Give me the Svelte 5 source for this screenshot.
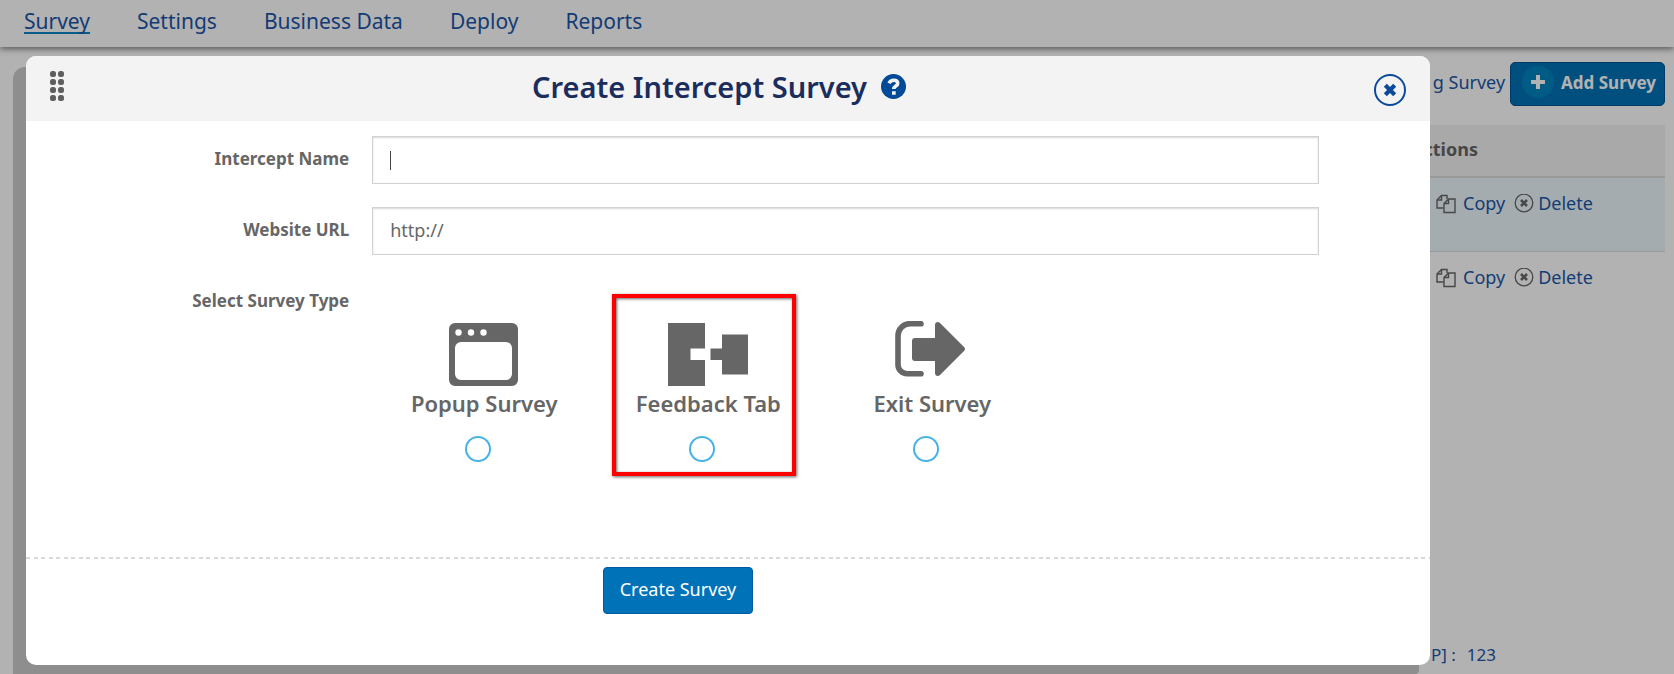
<script>
    const tabs = ["Survey", "Settings", "Business Data", "Deploy", "Reports"];
    const rows = [1, 2];
    const surveyTypes = [
        { id: "popup", label: "Popup Survey" },
        { id: "feedback", label: "Feedback Tab", highlighted: true },
        { id: "exit", label: "Exit Survey" },
    ];

    let isOpen = true;
    let name = "";
    let url = "http://";
    let surveyType = "";

    function closeModal() {
        isOpen = false;
    }
</script>

<div class="page">
    <nav class="topnav">
        {#each tabs as tab, i}
            <a href="#{tab}" class:active={i === 0}>{tab}</a>
        {/each}
    </nav>

    <main>
        <div class="toolbar">
            <a href="#survey">g Survey</a>
            <button class="add-button">
                <span class="plus">
                    <svg width="16" height="16" viewBox="0 0 16 16">
                        <path d="M8 1v14M1 8h14" stroke="#fff" stroke-width="4" />
                    </svg>
                </span>
                Add Survey
            </button>
        </div>

        <table>
            <thead>
                <tr><th></th><th class="actions">Actions</th></tr>
            </thead>
            <tbody>
                {#each rows as row}
                    <tr>
                        <td></td>
                        <td>
                            <div class="row-actions">
                                <a href="#copy">
                                    <svg width="20" height="20" viewBox="0 0 20 20" fill="none" stroke="#666" stroke-width="1.4">
                                        <path d="M7.500 14H1V6l4.500-4.500H11V5" />
                                        <path d="M5.500 1.500V6H1" />
                                        <path d="M12.500 5H19v13.500H8V9.500zM12.500 5v4.500H8" />
                                    </svg>
                                    <span>Copy</span>
                                </a>
                                <a href="#delete" class="delete">
                                    <svg width="20" height="20" viewBox="0 0 20 20" fill="none" stroke="#666">
                                        <circle cx="10" cy="9" r="8.800" stroke-width="1.300" />
                                        <path d="M7 6l6 6M13 6l-6 6" stroke-width="2.600" />
                                    </svg>
                                    <span>Delete</span>
                                </a>
                            </div>
                        </td>
                    </tr>
                {/each}
            </tbody>
        </table>

        <p class="usage"><span>P] :</span><span>123</span></p>
    </main>

    {#if isOpen}
        <div class="backdrop"></div>
        <div class="modal-shade"></div>
        <div class="modal" role="dialog" aria-modal="true" aria-labelledby="modal-title">
            <header class="modal-header">
                <svg class="grip" width="14" height="30" viewBox="0 0 14 30" fill="#5f5f5f">
                    {#each [3, 11, 19, 27] as cy}
                        <rect x="0" y={cy - 3} width="6" height="6" rx="2.500" />
                        <rect x="8" y={cy - 3} width="6" height="6" rx="2.500" />
                    {/each}
                </svg>
                <div class="title">
                    <h2 id="modal-title">Create Intercept Survey</h2>
                    <svg width="25" height="25" viewBox="0 0 25 25" fill="none">
                        <circle cx="12.500" cy="12.500" r="12.500" fill="#004a98" />
                        <path d="M8 9.300C9.100 7.100 10.600 6.200 12.700 6.200c2.300 0 4 1.200 4 3.200 0 2.800-3.900 2.600-3.900 5.700" stroke="#f3f3f3" stroke-width="3.600" />
                        <path d="M11 17.300h3.700v3.400H11z" fill="#f3f3f3" />
                    </svg>
                </div>
                <button class="close-button" on:click={closeModal} aria-label="Close">
                    <svg width="32" height="32" viewBox="0 0 32 32" fill="none" stroke="#0b4a9b">
                        <circle cx="16" cy="16" r="15" stroke-width="2" />
                        <path d="M11.300 11.300l9.400 9.400M20.700 11.300l-9.400 9.400" stroke-width="4.200" />
                    </svg>
                </button>
            </header>

            <form on:submit|preventDefault={closeModal}>
                <div class="fields">
                    <label for="name">Intercept Name</label>
                    <div class="input-wrap" class:empty={!name}>
                        <input id="name" type="text" bind:value={name} />
                    </div>

                    <label for="url">Website URL</label>
                    <div class="input-wrap">
                        <input id="url" type="text" bind:value={url} />
                    </div>

                    <span class="type-label" id="type-label">Select Survey Type</span>
                    <div class="types" role="radiogroup" aria-labelledby="type-label">
                        {#each surveyTypes as type}
                            <label class="type" class:highlighted={type.highlighted}>
                                {#if type.id === "popup"}
                                    <svg width="70" height="66" viewBox="0 0 70 66">
                                        <path fill="#666" fill-rule="evenodd" d="M6 2h57a6 6 0 0 1 6 6v51a6 6 0 0 1-6 6H6a6 6 0 0 1-6-6V8a6 6 0 0 1 6-6zM12 21a6 6 0 0 0-6 6v26a6 6 0 0 0 6 6h45a6 6 0 0 0 6-6V27a6 6 0 0 0-6-6z" />
                                        <g fill="#fff">
                                            <circle cx="9.500" cy="11.500" r="3.200" />
                                            <circle cx="22" cy="11.500" r="3.200" />
                                            <circle cx="34.500" cy="11.500" r="3.200" />
                                        </g>
                                    </svg>
                                {:else if type.id === "feedback"}
                                    <svg width="80" height="66" viewBox="0 0 80 66" fill="#666">
                                        <path d="M0 2h37v25.500H22.500v11.500H37v26H0z" />
                                        <path d="M54 13.500h26v40H54V39H42.500V27.500H54z" />
                                    </svg>
                                {:else}
                                    <svg width="74" height="66" viewBox="0 0 74 66" fill="#666">
                                        <path d="M26 2.700H15A12 12 0 0 0 3 14.700v29a9 9 0 0 0 9 9h14" fill="none" stroke="#666" stroke-width="5.600" stroke-linecap="round" />
                                        <path d="M20 17h20V4c0-3 3-4 5-2l24 24q2 2 0 4L45 54c-2 2-5 1-5-2V40H20q-3 0-3-3V20q0-3 3-3z" />
                                    </svg>
                                {/if}
                                <span>{type.label}</span>
                                <input type="radio" name="type" value={type.id} bind:group={surveyType} />
                            </label>
                        {/each}
                    </div>
                </div>

                <footer>
                    <button class="submit" type="submit">Create Survey</button>
                </footer>
            </form>
        </div>
    {/if}
</div>

<style>
    :global(body) {
        overflow: hidden;
        background: #fff;
    }

    .page,
    button,
    input {
        font-family: "Noto Sans", "Open Sans", sans-serif;
        font-size: 18px;
    }

    .page {
        position: relative;
        display: flex;
        flex-direction: column;
        min-height: 100vh;
        color: #666;
    }

    a {
        color: #1b56a8;
        text-decoration: none;
    }

    .topnav {
        display: flex;
        gap: 47px;
        box-sizing: border-box;
        height: 47px;
        padding: 6px 24px 0;
        box-shadow: 0 2px 6px rgba(0, 0, 0, 0.5);
    }

    .topnav a {
        height: 26px;
        line-height: 30px;
        font-size: 21px;
    }

    .topnav .active {
        border-bottom: 2px solid #0c84c4;
    }

    main {
        flex: 1;
        display: flex;
        flex-direction: column;
        padding: 15px 9px 8px 26px;
    }

    .toolbar {
        display: flex;
        justify-content: flex-end;
        align-items: center;
        gap: 5px;
        margin-bottom: 19px;
    }

    .toolbar a {
        padding-bottom: 4px;
    }

    .add-button {
        display: flex;
        align-items: center;
        gap: 7px;
        height: 44px;
        padding: 0 8px 4px 11px;
        border: 1px solid #005496;
        border-radius: 5px;
        background: #0071b7;
        color: #fff;
        font-size: 17px;
        font-weight: 700;
    }

    .plus {
        display: flex;
        align-items: center;
        justify-content: center;
        width: 32px;
        height: 32px;
        border-radius: 50%;
        background: #0085bd;
    }

    table {
        width: 100%;
        border-collapse: collapse;
    }

    th {
        height: 48px;
        padding: 0 0 3px;
        background: #f3f3f3;
        border-bottom: 2px solid #dcdcdc;
        text-align: left;
    }

    .actions {
        width: 254px;
    }

    td {
        height: 73px;
        padding: 0;
        vertical-align: top;
    }

    tbody tr:first-child {
        background: #edf7fb;
        border-bottom: 1px solid #d8dfe3;
    }

    .row-actions {
        display: flex;
        gap: 9px;
        padding: 13px 0 0 25px;
    }

    .row-actions a {
        display: flex;
        align-items: center;
        gap: 7px;
        line-height: 25px;
    }

    .row-actions .delete {
        gap: 4px;
    }

    .usage {
        display: flex;
        gap: 11px;
        width: 234px;
        margin: auto 0 0 auto;
        color: #1b56a8;
        font-size: 17px;
    }

    .backdrop {
        position: absolute;
        inset: 0;
        background: rgba(0, 0, 0, 0.3);
    }

    .modal-shade {
        position: absolute;
        top: 67px;
        right: 255px;
        bottom: 0;
        left: 13px;
        border-radius: 12px 12px 4px 0;
        background: #8e8e8e;
    }

    .modal {
        position: absolute;
        top: 56px;
        right: 244px;
        left: 26px;
        overflow: hidden;
        border-radius: 10px;
        background: #fff;
    }

    .modal-header {
        display: flex;
        justify-content: space-between;
        align-items: center;
        height: 65px;
        padding: 0 24px;
        background: #f3f3f3;
    }

    .grip {
        margin-bottom: 6px;
    }

    .title {
        display: flex;
        align-items: center;
        gap: 14px;
        margin-bottom: 4px;
    }

    h2 {
        margin: 0;
        color: #1b2d5d;
        font-size: 29px;
        font-weight: 600;
        line-height: 40px;
    }

    .close-button {
        display: flex;
        padding: 2px 0 0;
        border: none;
        background: none;
        cursor: pointer;
    }

    .fields {
        display: grid;
        grid-template-columns: 25% 1fr;
        column-gap: 23px;
        row-gap: 23px;
        padding: 15px 111px 0 0;
    }

    .fields > label,
    .type-label {
        text-align: right;
        font-size: 17px;
        font-weight: 700;
        line-height: 46px;
    }

    .input-wrap {
        position: relative;
    }

    .input-wrap input {
        display: block;
        box-sizing: border-box;
        width: 100%;
        height: 48px;
        padding: 0 17px 2px;
        border: 1px solid #d0d2d5;
        box-shadow: inset 0 1px 2px rgba(0, 0, 0, 0.15);
        color: #666;
        outline: none;
    }

    /* text caret */
    .empty::after {
        content: "";
        position: absolute;
        top: 15px;
        left: 18px;
        width: 1px;
        height: 19px;
        background: #444;
    }

    .types {
        display: flex;
        height: 279px;
    }

    .type {
        position: relative;
        display: flex;
        flex-direction: column;
        align-items: center;
        width: 224px;
        padding-top: 43px;
        font-size: 22px;
        font-weight: 600;
        line-height: 32px;
    }

    .type input {
        appearance: none;
        width: 26px;
        height: 26px;
        margin: 17px 12px 0 0;
        border: 2px solid #45b3e8;
        border-radius: 50%;
        background: #fff;
    }

    .type input:checked {
        background: #45b3e8;
    }

    .highlighted::after {
        content: "";
        position: absolute;
        top: 16px;
        right: 24px;
        left: 16px;
        height: 174px;
        border: 4px solid #f00;
        box-shadow:
            1px 1px 3px rgba(0, 0, 0, 0.6),
            inset 1px 1px 3px rgba(0, 0, 0, 0.6);
    }

    footer {
        display: flex;
        justify-content: center;
        padding: 10px 100px 51px 0;
        background: repeating-linear-gradient(90deg, #d9d9d9 0 4px, #fff 4px 8px, #d9d9d9 8px 12px, #fff 12px 15px) top / 100% 2px no-repeat;
    }

    .submit {
        height: 47px;
        padding: 0 16px 4px;
        border: 1px solid #005ba0;
        border-radius: 4px;
        background: #0072b8;
        color: #fff;
    }
</style>
